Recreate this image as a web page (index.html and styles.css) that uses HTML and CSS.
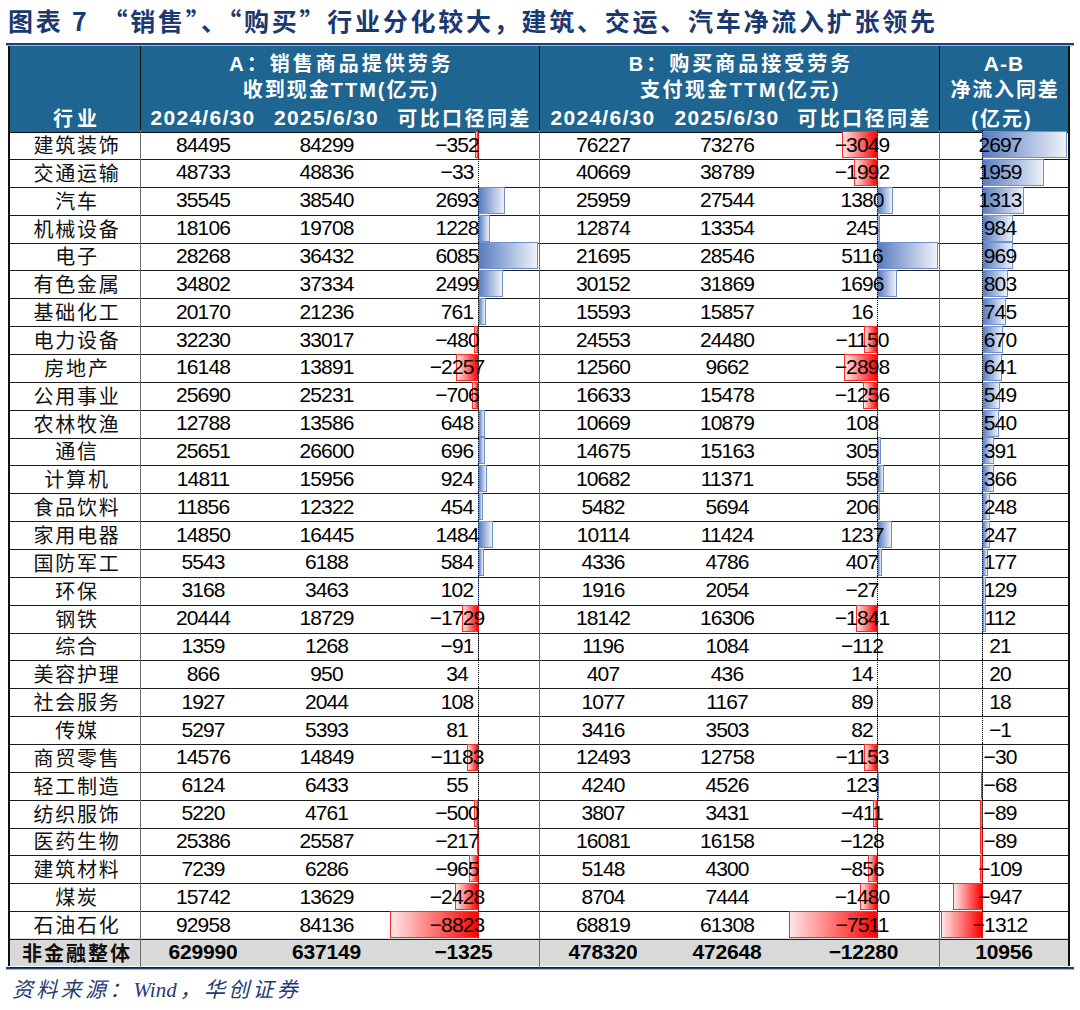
FILE: index.html
```html
<!DOCTYPE html>
<html lang="zh-CN">
<head>
<meta charset="utf-8">
<title>图表7</title>
<link rel="stylesheet" href="styles.css">
</head>
<body>
<div class="page">
  <h1 class="title">图表 <span class="fig">7</span>“销售”、“购买”行业分化较大，建筑、交运、汽车净流入扩张领先</h1>
  <div class="rule"></div>
  <div class="table">
    <div class="row hrow1">
      <div class="c h hsep"></div>
      <div class="c h hsep span3 two"><span class="l1 la">A：销售商品提供劳务</span><span class="l2 la2">收到现金TTM(亿元)</span></div>
      <div class="c h hsep span3 two"><span class="l1 lb">B：购买商品接受劳务</span><span class="l2 lb2">支付现金TTM(亿元)</span></div>
      <div class="c h two"><span class="l1 lab">A-B</span><span class="l2 lab2">净流入同差</span></div>
    </div>
    <div class="row hrow2">
      <div class="c h hsep hy">行业</div>
      <div class="c h hd">2024/6/30</div>
      <div class="c h hd">2025/6/30</div>
      <div class="c h hsep hc">可比口径同差</div>
      <div class="c h hd">2024/6/30</div>
      <div class="c h hd">2025/6/30</div>
      <div class="c h hsep hc">可比口径同差</div>
      <div class="c h hu">(亿元)</div>
    </div>

    <div class="row drow"><div class="c nm sep">建筑装饰</div><div class="c num">84495</div><div class="c num">84299</div><div class="c num d a sep"><i class="bar neg" style="--w:3.6px"></i><i class="ax"></i><span>−352</span></div><div class="c num">76227</div><div class="c num">73276</div><div class="c num d b sep"><i class="bar neg" style="--w:36.3px"></i><i class="ax"></i><span>−3049</span></div><div class="c num d ab"><i class="bar pos" style="--w:85px"></i><i class="ax"></i><span>2697</span></div></div>
    <div class="row drow"><div class="c nm sep">交通运输</div><div class="c num">48733</div><div class="c num">48836</div><div class="c num d a sep"><i class="ax"></i><span>−33</span></div><div class="c num">40669</div><div class="c num">38789</div><div class="c num d b sep"><i class="bar neg" style="--w:23.7px"></i><i class="ax"></i><span>−1992</span></div><div class="c num d ab"><i class="bar pos" style="--w:62.3px"></i><i class="ax"></i><span>1959</span></div></div>
    <div class="row drow"><div class="c nm sep">汽车</div><div class="c num">35545</div><div class="c num">38540</div><div class="c num d a sep"><i class="bar pos" style="--w:27.2px"></i><i class="ax"></i><span>2693</span></div><div class="c num">25959</div><div class="c num">27544</div><div class="c num d b sep"><i class="bar pos" style="--w:16.4px"></i><i class="ax"></i><span>1380</span></div><div class="c num d ab"><i class="bar pos" style="--w:41.8px"></i><i class="ax"></i><span>1313</span></div></div>
    <div class="row drow"><div class="c nm sep">机械设备</div><div class="c num">18106</div><div class="c num">19708</div><div class="c num d a sep"><i class="bar pos" style="--w:12.4px"></i><i class="ax"></i><span>1228</span></div><div class="c num">12874</div><div class="c num">13354</div><div class="c num d b sep"><i class="bar pos" style="--w:2.9px"></i><i class="ax"></i><span>245</span></div><div class="c num d ab"><i class="bar pos" style="--w:31.3px"></i><i class="ax"></i><span>984</span></div></div>
    <div class="row drow"><div class="c nm sep">电子</div><div class="c num">28268</div><div class="c num">36432</div><div class="c num d a sep"><i class="bar pos" style="--w:60px"></i><i class="ax"></i><span>6085</span></div><div class="c num">21695</div><div class="c num">28546</div><div class="c num d b sep"><i class="bar pos" style="--w:60.9px"></i><i class="ax"></i><span>5116</span></div><div class="c num d ab"><i class="bar pos" style="--w:30.8px"></i><i class="ax"></i><span>969</span></div></div>
    <div class="row drow"><div class="c nm sep">有色金属</div><div class="c num">34802</div><div class="c num">37334</div><div class="c num d a sep"><i class="bar pos" style="--w:25.2px"></i><i class="ax"></i><span>2499</span></div><div class="c num">30152</div><div class="c num">31869</div><div class="c num d b sep"><i class="bar pos" style="--w:20.2px"></i><i class="ax"></i><span>1696</span></div><div class="c num d ab"><i class="bar pos" style="--w:25.5px"></i><i class="ax"></i><span>803</span></div></div>
    <div class="row drow"><div class="c nm sep">基础化工</div><div class="c num">20170</div><div class="c num">21236</div><div class="c num d a sep"><i class="bar pos" style="--w:7.7px"></i><i class="ax"></i><span>761</span></div><div class="c num">15593</div><div class="c num">15857</div><div class="c num d b sep"><i class="ax"></i><span>16</span></div><div class="c num d ab"><i class="bar pos" style="--w:23.7px"></i><i class="ax"></i><span>745</span></div></div>
    <div class="row drow"><div class="c nm sep">电力设备</div><div class="c num">32230</div><div class="c num">33017</div><div class="c num d a sep"><i class="bar neg" style="--w:4.8px"></i><i class="ax"></i><span>−480</span></div><div class="c num">24553</div><div class="c num">24480</div><div class="c num d b sep"><i class="bar neg" style="--w:13.7px"></i><i class="ax"></i><span>−1150</span></div><div class="c num d ab"><i class="bar pos" style="--w:21.3px"></i><i class="ax"></i><span>670</span></div></div>
    <div class="row drow"><div class="c nm sep">房地产</div><div class="c num">16148</div><div class="c num">13891</div><div class="c num d a sep"><i class="bar neg" style="--w:22.8px"></i><i class="ax"></i><span>−2257</span></div><div class="c num">12560</div><div class="c num">9662</div><div class="c num d b sep"><i class="bar neg" style="--w:34.5px"></i><i class="ax"></i><span>−2898</span></div><div class="c num d ab"><i class="bar pos" style="--w:20.4px"></i><i class="ax"></i><span>641</span></div></div>
    <div class="row drow"><div class="c nm sep">公用事业</div><div class="c num">25690</div><div class="c num">25231</div><div class="c num d a sep"><i class="bar neg" style="--w:7.1px"></i><i class="ax"></i><span>−706</span></div><div class="c num">16633</div><div class="c num">15478</div><div class="c num d b sep"><i class="bar neg" style="--w:14.9px"></i><i class="ax"></i><span>−1256</span></div><div class="c num d ab"><i class="bar pos" style="--w:17.5px"></i><i class="ax"></i><span>549</span></div></div>
    <div class="row drow"><div class="c nm sep">农林牧渔</div><div class="c num">12788</div><div class="c num">13586</div><div class="c num d a sep"><i class="bar pos" style="--w:6.5px"></i><i class="ax"></i><span>648</span></div><div class="c num">10669</div><div class="c num">10879</div><div class="c num d b sep"><i class="bar pos tiny" style="--w:1.3px"></i><i class="ax"></i><span>108</span></div><div class="c num d ab"><i class="bar pos" style="--w:17.2px"></i><i class="ax"></i><span>540</span></div></div>
    <div class="row drow"><div class="c nm sep">通信</div><div class="c num">25651</div><div class="c num">26600</div><div class="c num d a sep"><i class="bar pos" style="--w:7px"></i><i class="ax"></i><span>696</span></div><div class="c num">14675</div><div class="c num">15163</div><div class="c num d b sep"><i class="bar pos" style="--w:3.6px"></i><i class="ax"></i><span>305</span></div><div class="c num d ab"><i class="bar pos" style="--w:12.4px"></i><i class="ax"></i><span>391</span></div></div>
    <div class="row drow"><div class="c nm sep">计算机</div><div class="c num">14811</div><div class="c num">15956</div><div class="c num d a sep"><i class="bar pos" style="--w:9.3px"></i><i class="ax"></i><span>924</span></div><div class="c num">10682</div><div class="c num">11371</div><div class="c num d b sep"><i class="bar pos" style="--w:6.6px"></i><i class="ax"></i><span>558</span></div><div class="c num d ab"><i class="bar pos" style="--w:11.6px"></i><i class="ax"></i><span>366</span></div></div>
    <div class="row drow"><div class="c nm sep">食品饮料</div><div class="c num">11856</div><div class="c num">12322</div><div class="c num d a sep"><i class="bar pos" style="--w:4.6px"></i><i class="ax"></i><span>454</span></div><div class="c num">5482</div><div class="c num">5694</div><div class="c num d b sep"><i class="bar pos" style="--w:2.5px"></i><i class="ax"></i><span>206</span></div><div class="c num d ab"><i class="bar pos" style="--w:7.9px"></i><i class="ax"></i><span>248</span></div></div>
    <div class="row drow"><div class="c nm sep">家用电器</div><div class="c num">14850</div><div class="c num">16445</div><div class="c num d a sep"><i class="bar pos" style="--w:15px"></i><i class="ax"></i><span>1484</span></div><div class="c num">10114</div><div class="c num">11424</div><div class="c num d b sep"><i class="bar pos" style="--w:14.7px"></i><i class="ax"></i><span>1237</span></div><div class="c num d ab"><i class="bar pos" style="--w:7.9px"></i><i class="ax"></i><span>247</span></div></div>
    <div class="row drow"><div class="c nm sep">国防军工</div><div class="c num">5543</div><div class="c num">6188</div><div class="c num d a sep"><i class="bar pos" style="--w:5.9px"></i><i class="ax"></i><span>584</span></div><div class="c num">4336</div><div class="c num">4786</div><div class="c num d b sep"><i class="bar pos" style="--w:4.8px"></i><i class="ax"></i><span>407</span></div><div class="c num d ab"><i class="bar pos" style="--w:5.6px"></i><i class="ax"></i><span>177</span></div></div>
    <div class="row drow"><div class="c nm sep">环保</div><div class="c num">3168</div><div class="c num">3463</div><div class="c num d a sep"><i class="bar pos tiny" style="--w:1px"></i><i class="ax"></i><span>102</span></div><div class="c num">1916</div><div class="c num">2054</div><div class="c num d b sep"><i class="ax"></i><span>−27</span></div><div class="c num d ab"><i class="bar pos" style="--w:4.1px"></i><i class="ax"></i><span>129</span></div></div>
    <div class="row drow"><div class="c nm sep">钢铁</div><div class="c num">20444</div><div class="c num">18729</div><div class="c num d a sep"><i class="bar neg" style="--w:17.5px"></i><i class="ax"></i><span>−1729</span></div><div class="c num">18142</div><div class="c num">16306</div><div class="c num d b sep"><i class="bar neg" style="--w:21.9px"></i><i class="ax"></i><span>−1841</span></div><div class="c num d ab"><i class="bar pos" style="--w:3.6px"></i><i class="ax"></i><span>112</span></div></div>
    <div class="row drow"><div class="c nm sep">综合</div><div class="c num">1359</div><div class="c num">1268</div><div class="c num d a sep"><i class="bar neg tiny" style="--w:0.9px"></i><i class="ax"></i><span>−91</span></div><div class="c num">1196</div><div class="c num">1084</div><div class="c num d b sep"><i class="bar neg tiny" style="--w:1.3px"></i><i class="ax"></i><span>−112</span></div><div class="c num d ab"><i class="bar pos tiny" style="--w:0.7px"></i><i class="ax"></i><span>21</span></div></div>
    <div class="row drow"><div class="c nm sep">美容护理</div><div class="c num">866</div><div class="c num">950</div><div class="c num d a sep"><i class="ax"></i><span>34</span></div><div class="c num">407</div><div class="c num">436</div><div class="c num d b sep"><i class="ax"></i><span>14</span></div><div class="c num d ab"><i class="bar pos tiny" style="--w:0.6px"></i><i class="ax"></i><span>20</span></div></div>
    <div class="row drow"><div class="c nm sep">社会服务</div><div class="c num">1927</div><div class="c num">2044</div><div class="c num d a sep"><i class="bar pos tiny" style="--w:1.1px"></i><i class="ax"></i><span>108</span></div><div class="c num">1077</div><div class="c num">1167</div><div class="c num d b sep"><i class="bar pos tiny" style="--w:1.1px"></i><i class="ax"></i><span>89</span></div><div class="c num d ab"><i class="bar pos tiny" style="--w:0.6px"></i><i class="ax"></i><span>18</span></div></div>
    <div class="row drow"><div class="c nm sep">传媒</div><div class="c num">5297</div><div class="c num">5393</div><div class="c num d a sep"><i class="bar pos tiny" style="--w:0.8px"></i><i class="ax"></i><span>81</span></div><div class="c num">3416</div><div class="c num">3503</div><div class="c num d b sep"><i class="bar pos tiny" style="--w:1px"></i><i class="ax"></i><span>82</span></div><div class="c num d ab"><i class="ax"></i><span>−1</span></div></div>
    <div class="row drow"><div class="c nm sep">商贸零售</div><div class="c num">14576</div><div class="c num">14849</div><div class="c num d a sep"><i class="bar neg" style="--w:11.9px"></i><i class="ax"></i><span>−1183</span></div><div class="c num">12493</div><div class="c num">12758</div><div class="c num d b sep"><i class="bar neg" style="--w:13.7px"></i><i class="ax"></i><span>−1153</span></div><div class="c num d ab"><i class="bar neg tiny" style="--w:1px"></i><i class="ax"></i><span>−30</span></div></div>
    <div class="row drow"><div class="c nm sep">轻工制造</div><div class="c num">6124</div><div class="c num">6433</div><div class="c num d a sep"><i class="bar pos tiny" style="--w:0.6px"></i><i class="ax"></i><span>55</span></div><div class="c num">4240</div><div class="c num">4526</div><div class="c num d b sep"><i class="bar pos tiny" style="--w:1.5px"></i><i class="ax"></i><span>123</span></div><div class="c num d ab"><i class="bar neg" style="--w:2.2px"></i><i class="ax"></i><span>−68</span></div></div>
    <div class="row drow"><div class="c nm sep">纺织服饰</div><div class="c num">5220</div><div class="c num">4761</div><div class="c num d a sep"><i class="bar neg" style="--w:5px"></i><i class="ax"></i><span>−500</span></div><div class="c num">3807</div><div class="c num">3431</div><div class="c num d b sep"><i class="bar neg" style="--w:4.9px"></i><i class="ax"></i><span>−411</span></div><div class="c num d ab"><i class="bar neg" style="--w:2.8px"></i><i class="ax"></i><span>−89</span></div></div>
    <div class="row drow"><div class="c nm sep">医药生物</div><div class="c num">25386</div><div class="c num">25587</div><div class="c num d a sep"><i class="bar neg" style="--w:2.2px"></i><i class="ax"></i><span>−217</span></div><div class="c num">16081</div><div class="c num">16158</div><div class="c num d b sep"><i class="bar neg tiny" style="--w:1.5px"></i><i class="ax"></i><span>−128</span></div><div class="c num d ab"><i class="bar neg" style="--w:2.8px"></i><i class="ax"></i><span>−89</span></div></div>
    <div class="row drow"><div class="c nm sep">建筑材料</div><div class="c num">7239</div><div class="c num">6286</div><div class="c num d a sep"><i class="bar neg" style="--w:9.7px"></i><i class="ax"></i><span>−965</span></div><div class="c num">5148</div><div class="c num">4300</div><div class="c num d b sep"><i class="bar neg" style="--w:10.2px"></i><i class="ax"></i><span>−856</span></div><div class="c num d ab"><i class="bar neg" style="--w:3.5px"></i><i class="ax"></i><span>−109</span></div></div>
    <div class="row drow"><div class="c nm sep">煤炭</div><div class="c num">15742</div><div class="c num">13629</div><div class="c num d a sep"><i class="bar neg" style="--w:24.5px"></i><i class="ax"></i><span>−2428</span></div><div class="c num">8704</div><div class="c num">7444</div><div class="c num d b sep"><i class="bar neg" style="--w:17.6px"></i><i class="ax"></i><span>−1480</span></div><div class="c num d ab"><i class="bar neg" style="--w:30.1px"></i><i class="ax"></i><span>−947</span></div></div>
    <div class="row drow"><div class="c nm sep">石油石化</div><div class="c num">92958</div><div class="c num">84136</div><div class="c num d a sep"><i class="bar neg" style="--w:89.1px"></i><i class="ax"></i><span>−8823</span></div><div class="c num">68819</div><div class="c num">61308</div><div class="c num d b sep"><i class="bar neg" style="--w:89.4px"></i><i class="ax"></i><span>−7511</span></div><div class="c num d ab"><i class="bar neg" style="--w:41.7px"></i><i class="ax"></i><span>−1312</span></div></div>

    <div class="row trow"><div class="c nm sep tb">非金融整体</div><div class="c num tb">629990</div><div class="c num tb">637149</div><div class="c num tb sep">−1325</div><div class="c num tb">478320</div><div class="c num tb">472648</div><div class="c num tb sep">−12280</div><div class="c num tb">10956</div></div>
  </div>
  <div class="rule rule-bottom"></div>
  <p class="source">资料来源：<span class="wind">Wind</span>，华创证券</p>
</div>
</body>
</html>
```

FILE: styles.css
```css
html, body {
  margin: 0;
  padding: 0;
  background: #ffffff;
}

.page {
  width: 1080px;
  height: 1010px;
  overflow: hidden;
}

.title {
  margin: 0;
  height: 43px;
  box-sizing: border-box;
  padding: 5px 0 0 8px;
  font-family: "Noto Sans CJK SC", sans-serif;
  font-weight: 700;
  font-size: 25px;
  line-height: 30px;
  letter-spacing: 2.75px;
  color: #1c3870;
  white-space: nowrap;
}

.fig {
  margin-right: 13px;
}

.rule {
  margin: 0 6px;
  height: 3px;
  box-sizing: border-box;
  border-top: 2px solid #1f3f7a;
  border-bottom: 1px solid #a3b7d9;
}

.rule-bottom {
  margin-top: 1px;
}

.table {
  margin: 0 0 0 8px;
  width: 1062px;
  box-sizing: border-box;
  border-left: 2px solid #111;
  border-right: 2px solid #111;
}

.row {
  display: grid;
  grid-template-columns: 131px 124px 123px 152px 126px 122px 152px 128px;
}

.hrow1 { height: 56px; }
.hrow2 { height: 28px; }
.drow { height: 27.86px; }
.trow { height: 28px; background: #d9d9d9; }

.c {
  box-sizing: border-box;
  border-bottom: 1px solid #1c1c1c;
  display: flex;
  align-items: center;
  justify-content: center;
  white-space: nowrap;
  min-width: 0;
}

.sep { border-right: 1px solid #6e6e6e; }

/* header */
.h {
  background: #1e6591;
  color: #ffffff;
  font-weight: 700;
  font-family: "Liberation Sans", "Noto Sans CJK SC", sans-serif;
  border-bottom-color: #0b0b0b;
}
.hsep { border-right: 1px solid #0b0b0b; }
.span3 { grid-column: span 3; }
.two {
  flex-direction: column;
  justify-content: flex-start;
  padding-top: 5px;
}
.two span {
  display: block;
  height: 26px;
  line-height: 26px;
  font-size: 20px;
}
.la { letter-spacing: 3px; padding-left: 3px; }
.la2 { letter-spacing: 2px; padding-left: 2px; }
.lb { letter-spacing: 3px; padding-left: 3px; }
.lb2 { letter-spacing: 2.4px; padding-left: 2px; }
.lab { letter-spacing: 1px; font-size: 21px !important; }
.lab2 { letter-spacing: 1.8px; padding-left: 2px; }

.hrow2 .h { font-size: 20px; padding-top: 1px; }
.hy { letter-spacing: 4px; padding-left: 4px; font-family: "Noto Sans CJK SC", sans-serif; }
.hd { font-size: 21px !important; letter-spacing: 1.3px; }
.hc { letter-spacing: 2.4px; padding-left: 2px; font-family: "Noto Sans CJK SC", sans-serif; }
.hu { letter-spacing: 2px; padding-right: 4px; }

/* body cells */
.nm {
  font-family: "Noto Sans CJK SC", sans-serif;
  font-size: 20px;
  letter-spacing: 1.8px;
  padding-left: 4px;
  color: #111;
}
.num {
  font-family: "Liberation Sans", sans-serif;
  font-size: 21px;
  letter-spacing: -0.9px;
  color: #000;
}
.tb { font-weight: 700; }
.nm.tb { letter-spacing: 2px; padding-left: 4px; }
.num.tb { letter-spacing: -0.2px; }

/* data bar cells */
.d { position: relative; }
.d.a { --ax: 90px; padding-right: 13px; }
.d.b { --ax: 89px; padding-right: 3px; }
.d.ab { --ax: 42px; padding-right: 8px; }

.d span {
  position: relative;
  z-index: 3;
}

.ax {
  position: absolute;
  left: var(--ax);
  top: 0;
  bottom: -1px;
  border-left: 1px dotted #000;
  z-index: 2;
}

.bar {
  position: absolute;
  top: 1px;
  bottom: 1px;
  width: var(--w);
  box-sizing: border-box;
  z-index: 1;
}
.bar.pos {
  left: var(--ax);
  border: 1px solid #6f90cb;
  background: linear-gradient(to right, #587bbf, #eef2f9);
}
.bar.neg {
  left: calc(var(--ax) + 1px - var(--w));
  border: 1px solid #ff2b2b;
  background: linear-gradient(to right, #ffe6e6, #ff0000);
}
.bar.tiny { border: none; }
.bar.pos.tiny { background: #6f90cb; }
.bar.neg.tiny { background: #ff2b2b; }

/* footer */
.source {
  margin: 5px 0 0 12px;
  font-family: "Noto Sans CJK SC", sans-serif;
  font-style: italic;
  font-size: 21px;
  line-height: 26px;
  letter-spacing: 3.3px;
  color: #1f3c74;
}
.wind {
  font-family: "Liberation Serif", serif;
  font-size: 21px;
  letter-spacing: 0;
  margin-right: 3px;
}
```
